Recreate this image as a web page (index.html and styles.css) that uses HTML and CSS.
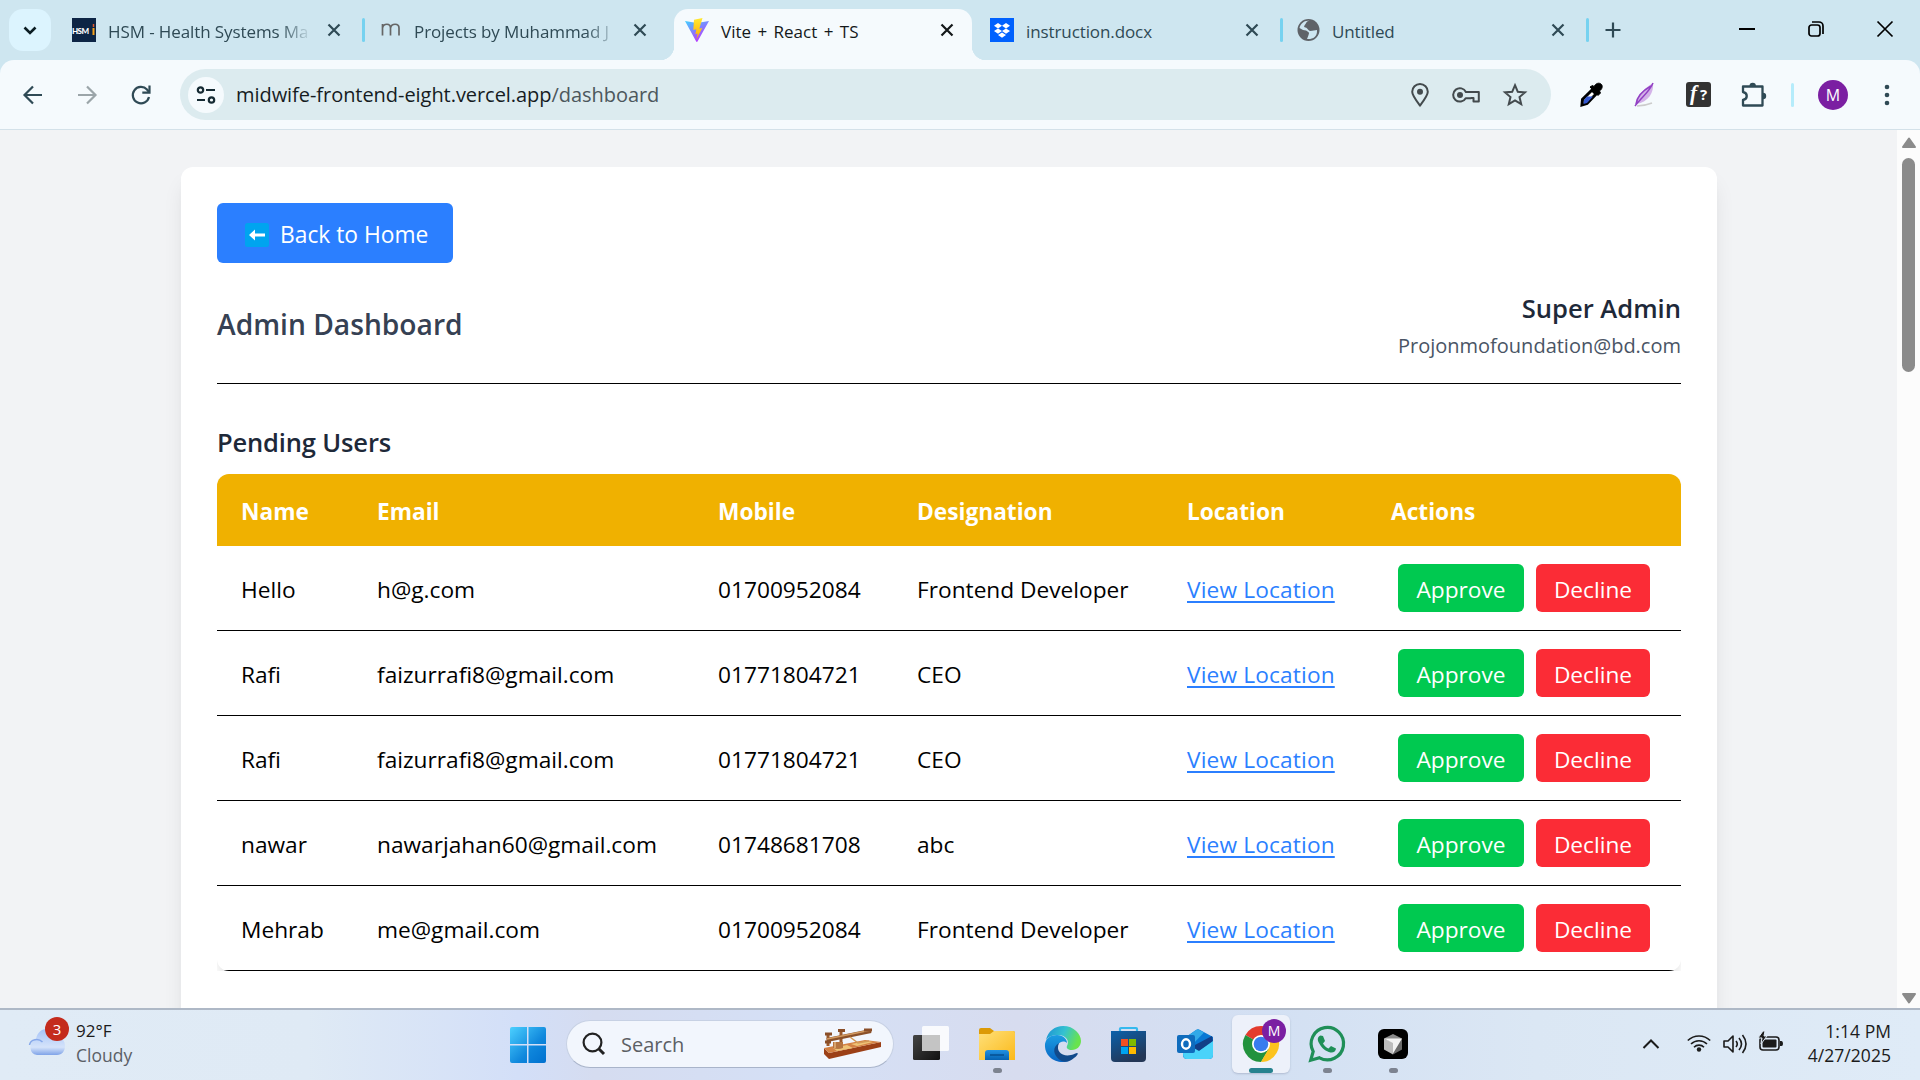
FILE: index.html
```html
<!DOCTYPE html>
<html lang="en">
<head>
<meta charset="utf-8">
<title>Vite + React + TS</title>
<link rel="stylesheet" href="styles.css">
</head>
<body>
<div class="screen">
  <header class="tabstrip">
    <div class="tab-search"><svg width="16" height="16" viewBox="0 0 16 16"><path d="M2.500 5.500 8 11l5.500-5.500" fill="none" stroke="#0b1c22" stroke-width="2.600"/></svg></div>
    <div class="tab">
      <svg class="favicon" viewBox="0 0 24 24"><rect width="24" height="24" fill="#0d2545"/><text x="0" y="16" font-family="Lato" font-size="8" font-weight="900" fill="#fff" textLength="17">HSM</text><path d="M20.500 10h2v7h-2z" fill="#f6a21c"/><path d="M21.500 6v3" stroke="#e2582c" stroke-width="1.500"/></svg>
      <span class="tab-title fade">HSM - Health Systems Ma</span>
      <svg class="close" viewBox="0 0 14 14"><path d="M1.500 1.500l11 11M12.500 1.500l-11 11"/></svg>
    </div>
    <div class="tab sep">
      <svg class="favicon" viewBox="0 0 24 24"><path d="M4.500 17.500V6M4.500 10c1-5 8-5 8 0v7.500M12.500 10c1-5 8.500-5 8.500 0v7.500" fill="none" stroke="#666" stroke-width="1.700"/></svg>
      <span class="tab-title fade">Projects by Muhammad J</span>
      <svg class="close" viewBox="0 0 14 14"><path d="M1.500 1.500l11 11M12.500 1.500l-11 11"/></svg>
    </div>
    <div class="tab active">
      <svg class="favicon" viewBox="0 0 24 24"><defs><linearGradient id="va" x1="0" y1="0" x2=".6" y2="1"><stop stop-color="#41d1ff"/><stop offset="1" stop-color="#bd34fe"/></linearGradient><linearGradient id="vb" x1="0" y1="0" x2="0" y2="1"><stop stop-color="#ffea33"/><stop offset="1" stop-color="#ffa800"/></linearGradient></defs><path d="M0 3l12 2L24 3 12.500 23.500c-.3.6-1 .6-1.300 0z" fill="url(#va)"/><path d="M17.500 0 9 1.700 8.300 12l3-.7-.9 5 2.300-.7-1.400 6 6-11.500-3 .6z" fill="url(#vb)"/></svg>
      <span class="tab-title">Vite + React + TS</span>
      <svg class="close" viewBox="0 0 14 14"><path d="M1.500 1.500l11 11M12.500 1.500l-11 11"/></svg>
    </div>
    <div class="tab">
      <svg class="favicon" viewBox="0 0 24 24"><rect width="24" height="24" fill="#0061fe"/><path d="M8 5l4 2.700-4 2.700-4-2.700zM16 5l4 2.700-4 2.700-4-2.700zM8 10.400l4 2.700-4 2.700-4-2.700zM16 10.400l4 2.700-4 2.700-4-2.700zM12 14.500l4 2.600-4 2.700-4-2.700z" fill="#fff"/></svg>
      <span class="tab-title">instruction.docx</span>
      <svg class="close" viewBox="0 0 14 14"><path d="M1.500 1.500l11 11M12.500 1.500l-11 11"/></svg>
    </div>
    <div class="tab sep">
      <svg class="favicon" viewBox="0 0 24 24"><circle cx="12.500" cy="12" r="11" fill="#5f6368"/><path d="M13.500 3c-3 0-3 1.500-4 3S7 9 9.500 9.500s2 3 5 3.500l6.500-1c.5 7-4.500 9.500-10 9l1-2.500 1-3c0-2-2-2-3-3l-3-.5-3.500-2C4.500 6 8.500 2 13.500 3z" fill="#cee6f0"/></svg>
      <span class="tab-title">Untitled</span>
      <svg class="close" viewBox="0 0 14 14"><path d="M1.500 1.500l11 11M12.500 1.500l-11 11"/></svg>
    </div>
    <div class="new-tab"><svg width="16" height="16" viewBox="0 0 16 16"><path d="M8 .5v15M.5 8h15" stroke="#2f4a55" stroke-width="2.200"/></svg></div>
    <div class="window-controls">
      <svg width="16" height="16" viewBox="0 0 16 16"><path d="M0 8h16" stroke="#000" stroke-width="2"/></svg>
      <svg width="16" height="16" viewBox="0 0 16 16"><rect x="1" y="4" width="11" height="11" rx="2.500" fill="none" stroke="#000" stroke-width="1.700"/><path d="M4 1h7a4 4 0 0 1 4 4v8" fill="none" stroke="#000" stroke-width="1.700"/></svg>
      <svg width="16" height="16" viewBox="0 0 16 16"><path d="M.5.500l15 15M15.500.500l-15 15" stroke="#000" stroke-width="1.700"/></svg>
    </div>
  </header>

  <nav class="toolbar">
    <div class="nav-buttons">
      <svg width="20" height="20" viewBox="0 0 20 20"><path d="M19 10H2M10 1.500 1.500 10l8.500 8.500" fill="none" stroke="#2f4a55" stroke-width="2.200"/></svg>
      <svg width="20" height="20" viewBox="0 0 20 20"><path d="M1 10h17M10 1.500l8.500 8.500-8.500 8.500" fill="none" stroke="#9ba5a9" stroke-width="2.200"/></svg>
      <svg width="20" height="20" viewBox="0 0 20 20"><path d="M18 12A8.200 8.200 0 1 1 16 4.500L18 7" fill="none" stroke="#2f4a55" stroke-width="2.200"/><path d="M18.500.5v7.200h-7.200" fill="none" stroke="#2f4a55" stroke-width="2.200"/></svg>
    </div>
    <div class="address">
      <span class="site-info"><svg width="20" height="18" viewBox="0 0 20 18"><g fill="none" stroke="#152a33" stroke-width="2.200"><circle cx="4.500" cy="4" r="2.700"/><path d="M10 4h9M1 14h8"/><circle cx="15.500" cy="14" r="2.700"/></g></svg></span>
      <span class="url">midwife-frontend-eight.vercel.app<span class="path">/dashboard</span></span>
      <div class="address-icons">
        <svg width="18" height="24" viewBox="0 0 18 24"><path d="M9 22.500C4 16 1.200 12.500 1.200 8.800a7.800 7.800 0 0 1 15.600 0C16.800 12.500 14 16 9 22.500z" fill="none" stroke="#434a4d" stroke-width="2"/><circle cx="9" cy="8.800" r="3" fill="#434a4d"/></svg>
        <svg width="28" height="18" viewBox="0 0 28 18"><path d="M13.900 6h12.900v9.500h-5.300V12h-2.500v.2h-5.300A6.700 6.700 0 1 1 13.900 6z" fill="none" stroke="#434a4d" stroke-width="2" stroke-linejoin="round"/><circle cx="8" cy="9" r="3" fill="#434a4d"/></svg>
        <svg width="24" height="24" viewBox="0 0 24 24"><path d="M12 2.200l2.800 6.600 7.200.6-5.500 4.700 1.700 7L12 17.400l-6.200 3.700 1.700-7L2 9.400l7.200-.6z" fill="none" stroke="#434a4d" stroke-width="2"/></svg>
      </div>
    </div>
    <div class="extensions">
      <svg width="24" height="26" viewBox="0 0 24 26"><path d="M3 23l.5-5.500L13 8l4 4-9 9.500z" fill="#fff" stroke="#000" stroke-width="3"/><path d="M4.500 22l.5-4 3-3.500h6L8 21z" fill="#3458cf"/><path d="M11 5l2.500-1.500L15 4.500C17 1 20 .5 22 2s1.500 5-1.500 7l1 2-2.500 2.500z" fill="#000" stroke="#000"/></svg>
      <svg width="22" height="26" viewBox="0 0 22 26"><path d="M20 1c1 9-4 19-17 21C3 14 12 6 20 1z" fill="#d3b2e8"/><path d="M20 1C17 9 9 15 2 24M18 4C9 9 4 15 3 22" fill="none" stroke="#9240c4" stroke-width="1.500"/><path d="M4 24c6 0 10-1 15-3" stroke="#ccc" stroke-width="1.500" fill="none"/></svg>
      <svg width="25" height="25" viewBox="0 0 25 25"><rect width="25" height="25" rx="3" fill="#333"/><text x="4" y="18" font-family="Liberation Serif" font-size="21" font-style="italic" font-weight="bold" fill="#fff">f</text><text x="14" y="18" font-family="Open Sans" font-size="15" font-weight="bold" fill="#fff">?</text></svg>
      <svg width="26" height="26" viewBox="0 0 26 26"><path d="M2 4.500h19.500V23.500H2v-5.500c5-1 5-7 0-8z" fill="none" stroke="#2f4a55" stroke-width="2.300" stroke-linejoin="round"/><path d="M8.500 4a3.200 3.200 0 0 1 6.400 0zM22 10.800a3.200 3.200 0 0 1 0 6.400z" fill="#2f4a55"/></svg>
    </div>
    <span class="toolbar-divider"></span>
    <span class="profile">M</span>
    <svg class="menu" width="6" height="22" viewBox="0 0 6 22"><g fill="#2f4a55"><circle cx="3" cy="3" r="2.300"/><circle cx="3" cy="11" r="2.300"/><circle cx="3" cy="19" r="2.300"/></g></svg>
  </nav>

  <div class="viewport">
    <main class="page">
      <section class="card">
        <button class="back"><svg width="24" height="24" viewBox="0 0 24 24"><rect width="24" height="24" rx="2.500" fill="#00a4ef"/><path d="M4 12l6-5.500v4h10v3H10v4z" fill="#fff"/></svg><span>Back to Home</span></button>
        <div class="heading">
          <h1>Admin Dashboard</h1>
          <div class="account"><p class="account-name">Super Admin</p><p class="account-mail">Projonmofoundation@bd.com</p></div>
        </div>
        <h2>Pending Users</h2>
        <div class="table-scroll">
        <div class="table">
          <div class="row head"><span>Name</span><span>Email</span><span>Mobile</span><span>Designation</span><span>Location</span><span>Actions</span></div>
          <div class="row"><span>Hello</span><span>h@g.com</span><span>01700952084</span><span>Frontend Developer</span><span><a>View Location</a></span><span class="actions"><button class="approve">Approve</button><button class="decline">Decline</button></span></div>
          <div class="row"><span>Rafi</span><span>faizurrafi8@gmail.com</span><span>01771804721</span><span>CEO</span><span><a>View Location</a></span><span class="actions"><button class="approve">Approve</button><button class="decline">Decline</button></span></div>
          <div class="row"><span>Rafi</span><span>faizurrafi8@gmail.com</span><span>01771804721</span><span>CEO</span><span><a>View Location</a></span><span class="actions"><button class="approve">Approve</button><button class="decline">Decline</button></span></div>
          <div class="row"><span>nawar</span><span>nawarjahan60@gmail.com</span><span>01748681708</span><span>abc</span><span><a>View Location</a></span><span class="actions"><button class="approve">Approve</button><button class="decline">Decline</button></span></div>
          <div class="row"><span>Mehrab</span><span>me@gmail.com</span><span>01700952084</span><span>Frontend Developer</span><span><a>View Location</a></span><span class="actions"><button class="approve">Approve</button><button class="decline">Decline</button></span></div>
        </div>
        </div>
      </section>
    </main>
    <div class="scrollbar">
      <svg width="16" height="12" viewBox="0 0 16 12"><path d="M8 1.500l6 8.500H2z" fill="#8b8b8b" stroke="#8b8b8b" stroke-width="2" stroke-linejoin="round"/></svg>
      <span class="thumb"></span>
      <svg width="16" height="12" viewBox="0 0 16 12"><path d="M8 10.500L2 2h12z" fill="#8b8b8b" stroke="#8b8b8b" stroke-width="2" stroke-linejoin="round"/></svg>
    </div>
  </div>

  <footer class="taskbar">
    <div class="weather">
      <div class="weather-icon">
        <svg width="38" height="28" viewBox="0 0 38 28"><defs><linearGradient id="cl" x1="0" y1="0" x2="0" y2="1"><stop stop-color="#a5c3f8"/><stop offset=".7" stop-color="#d5e3fa"/><stop offset="1" stop-color="#7fa3e8"/></linearGradient></defs><path d="M9 27a8 8 0 0 1-1-15.500C9 4 14 1 19 1c6 0 9 4 10 8 5 0 8 4 8 9s-3 9-8 9z" fill="url(#cl)"/><path d="M1.500 17c1-6 9-7 13-3" fill="none" stroke="#86a8ea" stroke-width="1.500"/></svg>
        <span class="badge">3</span>
      </div>
      <div class="weather-text"><span>92°F</span><span class="muted">Cloudy</span></div>
    </div>
    <div class="apps">
      <svg class="start" width="36" height="36" viewBox="0 0 36 36"><defs><linearGradient id="wn" gradientUnits="userSpaceOnUse" x1="0" y1="0" x2="36" y2="36"><stop stop-color="#4cd0ff"/><stop offset=".6" stop-color="#0f87dc"/><stop offset="1" stop-color="#0070cf"/></linearGradient></defs><path d="M2 0h15v17H0V2q0-2 2-2zM18.500 0H34q2 0 2 2v15H18.500zM0 18.500h17V36H2q-2 0-2-2zM18.500 18.500H36V34q0 2-2 2H18.500z" fill="url(#wn)"/></svg>
      <div class="search">
        <svg width="24" height="24" viewBox="0 0 24 24"><circle cx="10.500" cy="10.500" r="8.900" fill="none" stroke="#222" stroke-width="2.200"/><path d="M16.500 16.500l5.500 5.500" stroke="#222" stroke-width="3"/></svg>
        <span>Search</span>
        <svg class="telegraph" width="60" height="32" viewBox="0 0 60 32"><path d="M1 20l5 5 52-11v5L6 31l-5-5z" fill="#9c4017"/><path d="M1 20l41-8 16 2L6 25z" fill="#d48144"/><path d="M10 20l14-3 6 3-16 3zM28 16l16-3 6 1-16 4z" fill="#eec377"/><path d="M5 7v11M18 4v12" stroke="#9b5a2d" stroke-width="3"/><path d="M4 12l44-9" stroke="#8a5029" stroke-width="4"/><path d="M4 11l44-9" stroke="#d29a61" stroke-width="1.500"/><path d="M27 9l8 6 11-2" stroke="#d39a57" stroke-width="1.500" fill="none"/><path d="M2 6h7M15 2.500h7M41 2h8M2 14h6" stroke="#8a4e28" stroke-width="3"/><path d="M10 14h10v6q-5 2-10 0z" fill="#b57440"/><path d="M12 14v6" stroke="#e3b27a" stroke-width="1.500"/></svg>
      </div>
      <div class="app"><svg width="36" height="36" viewBox="0 0 36 36"><defs><linearGradient id="tv" x1="0" y1="0" x2="1" y2="1"><stop stop-color="#444"/><stop offset="1" stop-color="#111"/></linearGradient></defs><rect y="9" width="27" height="25" rx="1.500" fill="url(#tv)"/><rect x="9" width="27" height="25" rx="1.500" fill="#fff" opacity=".85"/><path d="M9 9h18v16H9z" fill="#c4c4c4"/></svg></div>
      <div class="app"><svg width="36" height="36" viewBox="0 0 36 36"><defs><linearGradient id="fo" x1="0" y1="0" x2="1" y2="1"><stop stop-color="#ffe07a"/><stop offset="1" stop-color="#fbb919"/></linearGradient><linearGradient id="fb" x1="0" y1="0" x2="0" y2="1"><stop stop-color="#2191e2"/><stop offset="1" stop-color="#0562b2"/></linearGradient></defs><path d="M0 4q0-2 2-2h9l4 3h19q2 0 2 2v3H0z" fill="#dc9a06"/><path d="M0 8h11l4-3h19q2 0 2 2v27H0z" fill="url(#fo)"/><path d="M6 34v-7q0-3 3-3h18q3 0 3 3v7z" fill="url(#fb)"/><path d="M11 29h14" stroke="#064f91" stroke-width="1.500"/></svg><i class="dot"></i></div>
      <div class="app"><svg width="36" height="36" viewBox="0 0 36 36"><defs><linearGradient id="e1" x1="0" y1="0" x2="1" y2=".3"><stop stop-color="#1a8fd5"/><stop offset=".55" stop-color="#35c2d0"/><stop offset="1" stop-color="#68e34d"/></linearGradient><linearGradient id="e2" x1="0" y1="0" x2="0" y2="1"><stop stop-color="#1b9de2"/><stop offset="1" stop-color="#0864c3"/></linearGradient></defs><path d="M1 14C3 5 10 0 18 0c11 0 18 8 18 15 0 5-4 9-9 9-4 0-6-2-5-4 3-5-1-11-9-11C7 9 3 11 1 14z" fill="url(#e1)"/><path d="M0 18C1 12 6 9 12 9c6 0 10 4 10 8-5-4-11 1-10 7 1 6 6 11 12 11-12 4-25-4-24-17z" fill="url(#e2)"/><path d="M14 17c-4 9 4 14 12 12 3-.6 5-2 6-2 2 0 0 3-3 5-4 4-10 5-14 2-7-5-8-13-1-17z" fill="#114a8b"/></svg></div>
      <div class="app"><svg width="36" height="36" viewBox="0 0 36 36"><defs><linearGradient id="st" x1="0" y1="0" x2=".5" y2="1"><stop stop-color="#0a61ab"/><stop offset="1" stop-color="#243756"/></linearGradient></defs><path d="M9 7V3q0-1 1-1h15q1 0 1 1v4" fill="none" stroke="#35b9ee" stroke-width="2.200"/><path d="M0 5h35v27q0 4-4 4H4q-4 0-4-4z" fill="url(#st)"/><path d="M10 13h7v7h-7z" fill="#f25022"/><path d="M18 13h7v7h-7z" fill="#7fba00"/><path d="M10 21h7v7h-7z" fill="#00a4ef"/><path d="M18 21h7v7h-7z" fill="#ffb900"/></svg></div>
      <div class="app"><svg width="36" height="36" viewBox="0 0 36 36"><path d="M6 13L19 4q2-1.500 4 0l13 7v18q0 4-4 4H10q-4 0-4-4z" fill="#0878d4"/><path d="M8 12l11-8 2-.8 6 3.300L13 21z" fill="#31a9e8"/><path d="M16 20l19-10 1 6-20 13z" fill="#123f88"/><path d="M6 27l9-6 7 4 14-10v14q0 4-4 4H10q-4 0-4-6z" fill="#49d3fa"/><rect y="9" width="18" height="18" rx="2" fill="#0f6cbd"/><ellipse cx="9" cy="18" rx="4" ry="4.700" fill="none" stroke="#fff" stroke-width="2.400"/></svg></div>
      <div class="app current"><svg width="36" height="36" viewBox="0 0 36 36"><path d="M18 18L2.400 9A18 18 0 0 1 33.600 9z" fill="#e33b2e"/><path d="M18 18L2.400 9A18 18 0 0 0 18 36l8-13z" fill="#22923d"/><path d="M18 9h15.600A18 18 0 0 1 18 36l8-14z" fill="#fcc31e"/><circle cx="18" cy="18" r="9" fill="#fff"/><circle cx="18" cy="18" r="7.300" fill="#377cee"/></svg><span class="app-badge">M</span><i class="dot wide"></i></div>
      <div class="app"><svg width="36" height="36" viewBox="0 0 36 36"><path d="M1.700 34.300l2.500-8.800a16.200 16.200 0 1 1 6.300 6.300z" fill="none" stroke="#1f8f58" stroke-width="3.200"/><path d="M11.500 9.500c-3 1.500-3.500 4-1.500 7.500 3 5.500 7 8.500 11.500 9.500 3 .5 5.500-1.500 5.500-4l-5-2.500-2.500 2.500c-2-.6-4.500-3-5.500-5l2-2.500-2-5z" fill="#1f8f58"/></svg><i class="dot"></i></div>
      <div class="app"><svg width="30" height="30" viewBox="0 0 30 30"><rect width="30" height="30" rx="6" fill="#000"/><path d="M15 5l9 4.500-9 3.500-9-3.500z" fill="#8a8a8a"/><path d="M6 9.500l9 3.500v12.500l-9-5z" fill="#bdbdbd"/><path d="M24 9.500V20.500l-9 5V13z" fill="#6b6b6b"/><path d="M6 9.500l18 0-9 15V14z" fill="#f3f3f3"/></svg><i class="dot"></i></div>
    </div>
    <div class="tray">
      <svg width="18" height="12" viewBox="0 0 18 12"><path d="M1.500 10L9 2.500l7.500 7.500" fill="none" stroke="#1b1b1b" stroke-width="2"/></svg>
      <svg class="wifi" width="24" height="18" viewBox="0 0 24 18"><g fill="none" stroke="#1b1b1b" stroke-width="1.600"><path d="M.8 6.500a16 16 0 0 1 22.400 0"/><path d="M4 10a11.300 11.300 0 0 1 16 0"/><path d="M7 13.200a7 7 0 0 1 10 0"/></g><circle cx="12" cy="15.500" r="2.200" fill="#1b1b1b"/></svg>
      <svg class="volume" width="24" height="20" viewBox="0 0 24 20"><g fill="none" stroke="#1b1b1b" stroke-width="1.600"><path d="M1 7h4l5-5v16l-5-5H1z" stroke-linejoin="round"/><path d="M13 7q2.500 3 0 6M16 4q5 6 0 12M19.500 1q7 9 0 18"/></g></svg>
      <svg class="battery" width="26" height="20" viewBox="0 0 26 20"><rect x="2" y="5" width="19" height="13" rx="3" fill="none" stroke="#1b1b1b" stroke-width="1.600"/><rect x="4.500" y="7.500" width="14" height="8" rx="1" fill="#1b1b1b"/><path d="M22 9h1.500q1.500 0 1.500 2.500T23.500 14H22z" fill="#1b1b1b"/><path d="M5-1L0 6h4l-1 6 6-8H6l1-5z" fill="#1b1b1b" stroke="#dfeaf5" stroke-width="1"/></svg>
      <div class="clock"><span>1:14 PM</span><span>4/27/2025</span></div>
    </div>
  </footer>
</div>
</body>
</html>
```

FILE: styles.css
```css
* { box-sizing: border-box; }
body { margin: 0; font-family: "Open Sans", "Noto Sans", sans-serif; overflow: hidden; }
h1, h2, p { margin: 0; }
svg { display: block; flex: none; overflow: visible; }
button { border: 0; font: inherit; color: #fff; }
.screen { width: 1920px; height: 1080px; display: flex; flex-direction: column; background: #cee6f0; overflow: hidden; }

/* Browser tabs */
.tabstrip { height: 60px; flex: none; display: flex; padding-left: 9px; }
.tab-search { width: 42px; height: 42px; margin: 9px 6px 0 0; border-radius: 14px; background: #dcf4fe; display: grid; place-items: center; }
.tab { width: 306px; height: 51px; margin-top: 9px; padding: 9px 22px 0 15px; display: flex; align-items: flex-start; position: relative; color: #2f4a55; }
.favicon { width: 24px; height: 24px; }
.tab-title { flex: 1; margin-left: 12px; margin-right: 15px; padding-top: 2px; font-size: 17px; letter-spacing: -0.1px; line-height: 24px; white-space: nowrap; }
.fade { -webkit-mask-image: linear-gradient(90deg, #000 84%, transparent); mask-image: linear-gradient(90deg, #000 84%, transparent); }
.close { width: 14px; height: 14px; margin-top: 5px; fill: none; stroke: currentColor; stroke-width: 2.2; }
.sep::before { content: ""; position: absolute; left: -1px; top: 9px; width: 3px; height: 24px; border-radius: 2px; background: #76d2f0; }
.active { background: #f5fafd; color: #14181a; width: 298px; margin-left: 5px; margin-right: 3px; padding: 9px 18px 0 11px; border-radius: 14px 14px 0 0; }
.active .tab-title { letter-spacing: 0; word-spacing: 2px; }
.active::before, .active::after { content: ""; position: absolute; bottom: 0; width: 14px; height: 14px; }
.active::before { left: -14px; background: radial-gradient(circle at 0 0, transparent 14px, #f5fafd 14.5px); }
.active::after { right: -14px; background: radial-gradient(circle at 100% 0, transparent 14px, #f5fafd 14.5px); }
.new-tab { width: 60px; padding: 22px 0 0 18px; position: relative; }
.new-tab::before { content: ""; position: absolute; left: -1px; top: 18px; width: 3px; height: 24px; border-radius: 2px; background: #76d2f0; }
.window-controls { margin-left: auto; padding: 21px 27px 0 0; display: flex; gap: 53px; }

/* Browser toolbar */
.toolbar { height: 70px; flex: none; display: flex; align-items: center; background: #f5fafd; border-bottom: 1px solid #d3e1e9; border-radius: 14px 14px 0 0; }
.nav-buttons { width: 180px; padding-left: 23px; display: flex; gap: 34px; }
.address { width: 1371px; height: 51px; border-radius: 26px; background: #dcebef; display: flex; align-items: center; padding: 0 24px 0 8px; }
.site-info { width: 36px; height: 36px; border-radius: 50%; background: #f5fafd; display: grid; place-items: center; }
.url { margin-left: 12px; font-size: 20px; letter-spacing: -0.05px; color: #161c1f; white-space: nowrap; }
.path { color: #4c575c; }
.address-icons { margin-left: auto; display: flex; align-items: center; gap: 23px; }
.extensions { margin-left: 28px; display: flex; align-items: center; gap: 30.3px; }
.toolbar-divider { width: 3px; height: 24px; margin-left: 24px; background: #b5ecfb; border-radius: 2px; }
.profile { width: 30px; height: 30px; margin-left: 24px; border-radius: 50%; background: #7b1fa2; color: #fff; font-size: 16px; display: grid; place-items: center; }
.menu { margin-left: 36px; }

/* Page */
.viewport { height: 878px; flex: none; display: flex; overflow: hidden; background: #f2f3f5; }
.page { width: 1897px; padding: 37px 180px 0 181px; }
.card { height: 1100px; padding: 36px; background: #fff; border-radius: 12px; box-shadow: 0 15px 22px -4px rgba(0,0,0,.1), 0 6px 9px -6px rgba(0,0,0,.1); }
.back { width: 236px; height: 60px; padding: 1px 0 0 28px; display: flex; align-items: center; gap: 11px; border-radius: 6px; background: #2b7fff; font-size: 22.8px; white-space: nowrap; }
.back svg { margin-top: 3px; }
.back span { padding-top: 2px; }
.heading { height: 97px; margin: 24px 0 0; padding-bottom: 22px; border-bottom: 1px solid #000; display: flex; justify-content: space-between; align-items: center; }
h1 { font-size: 28.2px; line-height: 40px; font-weight: 600; color: #364153; }
.account { text-align: right; }
.account-name { font-size: 25.6px; line-height: 42px; font-weight: 600; color: #1e2939; }
.account-mail { font-size: 20px; line-height: 31px; color: #4a5565; }
h2 { margin: 36px 0 12px; height: 42px; line-height: 44px; font-size: 25.5px; font-weight: 600; letter-spacing: -0.15px; color: #1e2939; }
.table-scroll { overflow: hidden; }
.table { border-radius: 12px; overflow: hidden; background: #fff; box-shadow: 0 6px 9px -1px rgba(0,0,0,.1); }
.row { height: 85px; display: grid; grid-template-columns: 136px 341px 199px 270px 204px 314px; align-items: center; border-bottom: 1px solid #000; font-size: 22.7px; color: #000; }
.row > span { padding: 2px 0 0 24px; white-space: nowrap; }
.head { height: 72px; border: 0; background: #f0b100; color: #fff; font-weight: 700; }
.row a { letter-spacing: 0.15px; color: #2b7fff; text-decoration: underline; text-underline-offset: 3px; text-decoration-thickness: 1.5px; }
.row > .actions { display: flex; gap: 12px; padding: 0 0 0 31px; }
.actions button { height: 48px; padding: 2px 0 0; border-radius: 6px; }
.approve { width: 126px; background: #00c950; }
.decline { width: 114px; background: #fb2c36; }
.scrollbar { width: 23px; background: #fcfcfc; padding: 7px 4px 4px; display: flex; flex-direction: column; align-items: center; }
.thumb { width: 13px; height: 214px; margin: 9px 0 auto; border-radius: 7px; background: #8b8b8b; }

/* Taskbar */
.taskbar { height: 72px; display: flex; border-top: 2px solid #aeb8c6; background: linear-gradient(90deg, #e0ebf6 0, #dfeaf5 16%, #d3dff8 27%, #d5dcf0 31%, #d5e0f6 42%, #d7dcef 53%, #d3e0f3 66%, #dbe7f4 80%, #dfebf7 100%); }
.weather { width: 510px; padding-left: 28px; display: flex; }
.weather-icon { width: 48px; position: relative; padding-top: 18px; }
.badge { position: absolute; left: 17px; top: 7px; width: 24px; height: 24px; border-radius: 50%; background: #c42b1c; color: #fff; font-size: 15px; line-height: 24px; text-align: center; }
.weather-text, .clock { display: flex; flex-direction: column; padding-top: 9px; font-size: 17px; line-height: 24px; color: #1b1b1b; }
.muted { color: #5b6066; font-size: 17.5px; }
.apps { display: flex; }
.start { margin: 17px 20px 0 0; }
.search { width: 328px; height: 48px; margin: 10px 4px 0 0; padding: 0 10px 0 15px; border: 1.5px solid #c7d1e4; border-bottom-color: #a9b4ca; border-radius: 24px; background: #f2f6fd; display: flex; align-items: center; font-size: 20px; color: #5c5f64; }
.search span { margin-left: 15px; }
.telegraph { margin-left: auto; }
.app { width: 58px; height: 58px; margin: 5px 4px 0; display: grid; place-items: center; position: relative; border-radius: 6px; }
.current { background: #edf1fa; box-shadow: 0 1px 2px rgba(70,80,110,.25); }
.dot { position: absolute; left: 25px; bottom: 0; width: 9px; height: 5px; border-radius: 3px; background: #7d8390; }
.wide { left: 17px; width: 24px; background: #26828f; }
.app-badge { position: absolute; left: 30px; top: 4px; width: 24px; height: 24px; border-radius: 50%; background: #7b1fa2; color: #fff; font-size: 14px; line-height: 24px; text-align: center; }
.tray { margin-left: auto; padding-right: 29px; display: flex; align-items: flex-start; }
.tray > svg { margin-top: 28px; }
.tray > .wifi { margin: 24px 0 0 27px; }
.tray > .volume { margin: 24px 0 0 12px; }
.tray > .battery { margin: 22px 0 0 11px; }
.clock { width: 107px; text-align: right; font-size: 17.5px; letter-spacing: 0.05px; }
```
